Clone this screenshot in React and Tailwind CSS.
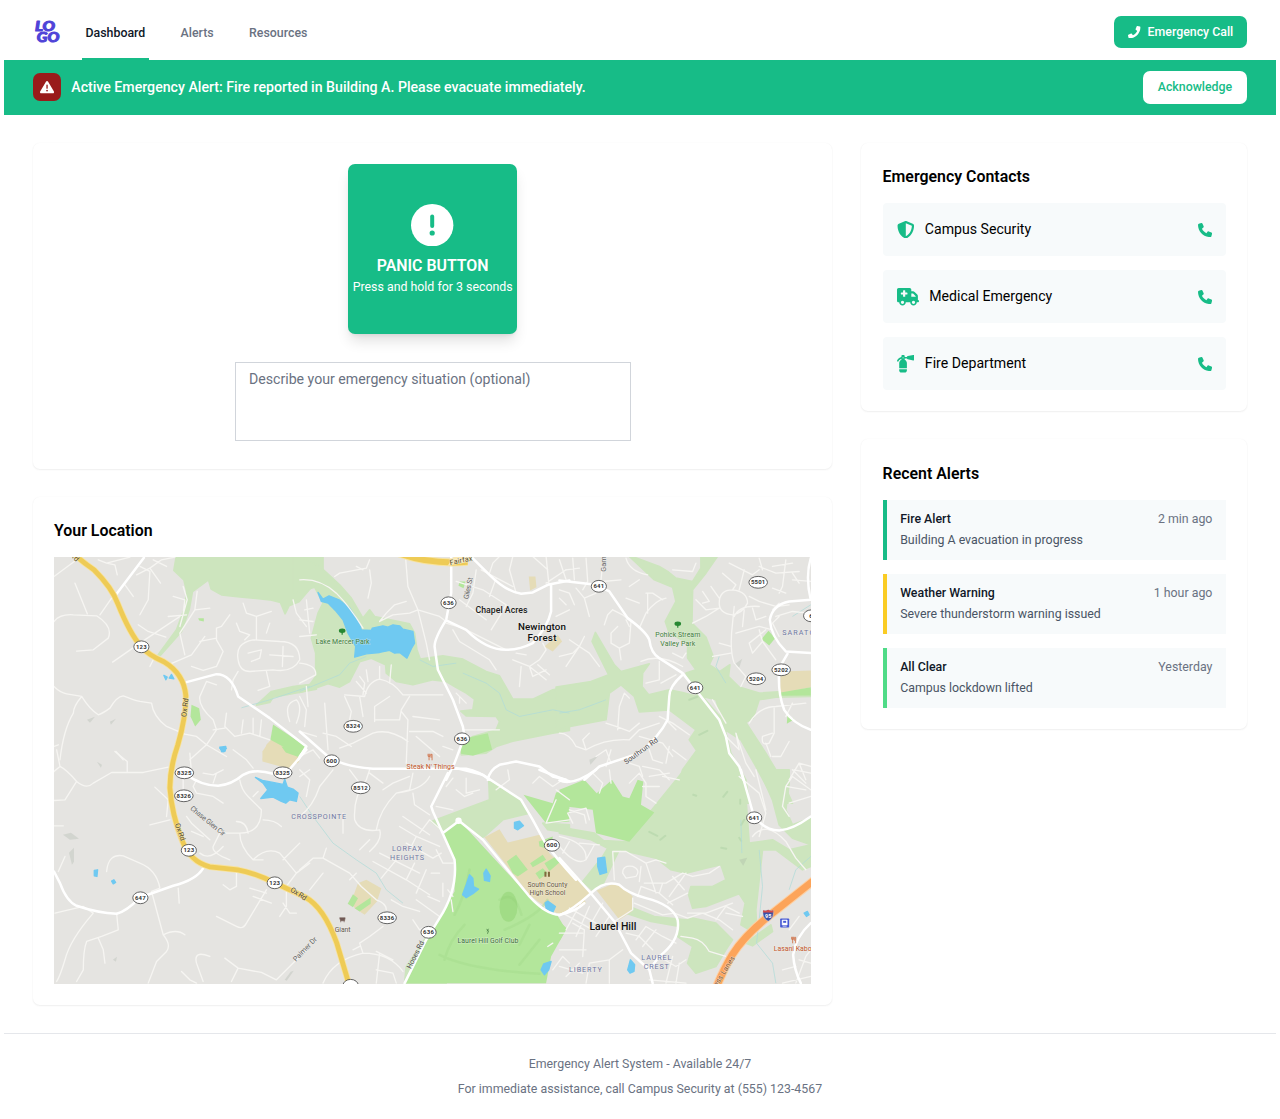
import React from "react";
import { FaPhone as FaHandset } from "react-icons/fa";
import {
  FaPhone,
  FaShieldHalved,
  FaTruckMedical,
  FaFireExtinguisher,
  FaTriangleExclamation,
} from "react-icons/fa6";

/* Each map tile has its own origin; its shapes use a grid of three units per pixel. */
const TILES = {
  nw: { x: 40, y: 500 },
  n: { x: 300, y: 550 },
  ne: { x: 560, y: 550 },
  sw: { x: 40, y: 750 },
  s: { x: 300, y: 770 },
  se: { x: 560, y: 770 },
};

const PARKS = {
  nw: [
    "M410 165L402 212L432 240L440 272L436 320L410 390L355 465L362 466L425 395L448 330L458 275L506 240L514 268L545 285L600 291L690 300L722 308L736 342L748 318L778 306L810 268L850 230L850 165Z",
    "M650 616L695 575L760 560L830 552L830 568L745 584L700 592L690 608Z",
  ],
  n: [
    "M-20 10L60 50L120 105L155 145L190 205L210 180L225 200L330 222L345 250L352 300L362 328L430 318L490 328L560 365L600 378L640 448L700 448L760 420L810 410L810 542L760 550L640 574L590 590L560 610L485 615L488 590L520 560L590 540L600 515L590 500L500 498L484 484L520 480L525 448L500 430L465 410L440 395L400 390L340 405L290 395L260 370L258 345L215 325L180 336L150 395L120 412L85 402L55 412L0 428L-20 425L-20 412L30 405L48 380L48 310L35 265L55 190L70 160L45 112L0 125L-20 130Z",
  ],
  ne: [
    "M205 15L300 50L325 65L350 85L400 95L425 55L425 15L478 15L440 70L400 120L398 220L440 262L462 320L450 345L482 365L512 345L508 380L540 412L600 430L755 420L755 440L650 442L600 450L582 505L560 518L620 610L668 690L700 760L650 760L590 650L545 570L498 540L470 450L430 440L490 510L515 610L560 690L570 760L340 760L370 660L412 602L390 570L410 540L330 480L240 486L225 440L185 405L150 430L140 510L0 536L-10 536L-10 412L0 410L95 395L148 375L98 275L108 248L165 345L185 365L270 342L250 370L248 410L268 435L330 420L370 428L415 440L380 370L410 360L385 325L385 280L330 250L318 215L350 155L340 112L285 90Z",
  ],
  sw: [],
  s: [
    "M395 155L570 90L568 35L625 65L665 90L690 130L610 150L555 200L540 205L480 150L430 185Z",
    "M730 160L810 165L810 190L745 180Z",
    "M320 590L395 480L410 470L350 610L440 640L315 640Z",
  ],
  se: [
    "M375 0L200 216L132 212L105 190L0 172L0 190L95 210L145 235L130 260L70 335L98 360L130 345L165 270L180 240L290 265L335 300L380 310L440 295L485 285L500 330L460 350L395 350L388 375L400 415L440 410L540 372L558 400L545 465L570 480L592 465L590 420L610 240L650 240L730 300L755 290L755 225L690 240L640 210L570 220L560 80L520 0Z",
    "M210 410L285 440L380 450L400 445L470 460L520 510L500 540L470 590L410 610L385 580L400 530L355 500L360 470L275 455L200 430Z",
    "M600 0L690 0L690 40L680 120L700 165L755 145L755 225L700 205L660 165L640 90Z",
    "M635 465L640 485L580 528L560 520Z",
  ],
};

const BRIGHT = {
  nw: [
    "M455 615L478 625L483 660L466 680L452 650Z",
    "M700 674L799 740L785 770L692 720Z",
    "M475 355L492 355L492 365L478 362Z",
  ],
  n: [
    "M484 568L565 550L578 600L520 618L484 612Z",
    "M-5 580L18 595L0 616Z",
    "M480 95L498 95L492 115L477 108Z",
  ],
  ne: ["M607 268L628 243L648 265L630 287Z", "M665 428L755 412L755 437L665 438Z", "M685 495L706 508L683 522Z"],
  sw: ["M725 -10L792 -10L778 22L738 8Z"],
  s: [
    "M477 150L430 190L465 265L465 365L400 475L320 640L740 640L755 560L800 480L770 430L730 420L680 370Z",
    "M672 75L760 100L770 68L810 60L810 155L740 160Z",
    "M622 275L650 255L685 300L655 320L640 310ZM692 280L730 255L740 270L700 292ZM735 280L765 262L780 278L750 304ZM708 310L730 295L745 310L720 328ZM718 215L760 200L755 240L720 230Z",
    "M160 373L175 385L160 412L144 402ZM165 415L213 383L213 402L180 425Z",
  ],
  se: [
    "M0 60L75 30L112 70L158 30L190 80L210 85L235 30L252 35L245 105L285 128L210 216L110 190L100 120L20 110L15 155L0 155Z",
    "M0 455L22 475L0 515Z",
  ],
};

const SAND = {
  nw: ["M680 735L695 718L785 765L775 790L668 780Z"],
  n: ["M688 80L708 80L711 112L692 122ZM735 290L775 255L788 275L760 305Z"],
  ne: ["M665 365L755 362L755 412L662 430Z"],
  sw: ["M668 5L685 -20L770 20L752 58L668 35Z"],
  s: [
    "M555 202L600 178L625 218L720 195L750 250L830 330L860 400L775 432L715 395L690 375Z",
    "M175 340L200 330L245 355L232 395L195 435L165 415L155 395Z",
  ],
  se: ["M0 265L95 370L0 435Z", "M112 362L165 340L200 360L220 380L218 425L180 450Z"],
};

const WATER = {
  nw: ["M372 527L382 532L378 540ZM388 535L395 524L402 537ZM540 742L558 740L556 754L546 756Z"],
  n: [
    "M55 128L70 148L88 138L118 150L150 175L178 218L185 240L215 242L218 235L250 228L265 232L280 225L300 228L310 238L340 245L345 280L336 295L322 325L300 308L285 310L270 302L240 308L200 312L165 322L168 290L145 250L130 210L110 185L85 160L65 155Z",
  ],
  ne: [],
  sw: [
    "M647 83L668 92L700 98L730 104L735 88L743 112L760 118L775 130L770 155L750 150L738 160L725 155L700 142L663 146L684 120L670 100Z",
    "M163 362L173 360L171 380L163 378ZM215 394L222 390L227 398L220 402ZM540 -5L560 -5L552 6Z",
  ],
  s: [
    "M510 315L520 325L522 350L537 358L520 372L500 384L489 375L500 345ZM553 310L560 298L572 318L570 335L555 332ZM645 158L660 154L672 168L655 180L645 175ZM737 400L745 394L768 410L760 428L740 415ZM725 600L733 582L755 575L748 600L735 615Z",
  ],
  se: [
    "M115 265L136 262L142 308L122 314L115 290ZM205 600L213 570L226 585L224 605L212 610ZM735 430L745 425L750 435L742 440Z",
  ],
};

const STREAMS = {
  n: "M0 425L60 400L120 375L150 340L200 320M360 330L400 350L470 340M490 370L560 400L600 430L620 480L660 500L760 480L810 490",
  ne: "M0 490L60 480L140 450M480 320L470 350L500 400M755 165L700 200",
  s: "M0 80L40 140L100 220L170 270L230 310L260 360L310 400",
  se: "M545 150L548 250M600 240L610 350L600 450L592 520L640 580L650 640M755 260L710 300L690 360",
  nw: "M605 624L690 600L810 560",
};

const MINOR = {
  nw: "M42 230L110 180M175 180L200 190L225 195L232 225M200 190L270 172M180 345L215 295M105 250L125 300L142 342M42 365Q60 342 100 345L170 348Q220 380 205 415L160 450L110 454M290 225L330 205L362 250M300 200L330 215L325 300L300 345M330 205L365 180L405 172M255 255L280 290M218 487L300 430L390 370L420 350M295 375L325 395L378 412M330 500L345 470M400 290L435 300L430 340M385 350L440 345M430 260L442 300L420 380M472 275L465 330L420 400L435 465M465 330L510 325M385 495L455 465L495 410M530 385L530 420L550 455L530 500L490 512L455 500M530 415L480 425M530 500L540 480M570 345L545 380L530 385M610 310L620 340L650 350L695 335M650 350L650 418M590 370L600 395L630 405L615 420M690 370L680 400M595 480Q585 430 640 420L720 425Q780 425 780 480Q760 520 700 510L630 515Q600 515 595 480ZM625 460L665 450L660 475L635 485M690 465L760 470M730 440L728 500M680 515L690 560L655 572M595 515L580 540L575 570M760 300L770 340L800 380M800 300L810 400M42 560Q60 578 80 582L125 590Q150 630 175 645Q190 640 210 625Q230 590 250 588Q280 600 300 605L335 610Q340 650 380 680L435 703L470 710L500 735L560 770M125 590Q100 620 100 640Q70 690 60 780M42 740L55 735M500 545L480 590Q475 620 520 660L530 690L500 735L450 780M560 640L555 680L585 710L630 700L690 720M610 660L605 700M640 655L640 700M665 660L660 710M520 690L555 685M750 665Q730 610 770 600Q790 620 770 670M500 545L530 555M228 755L250 780M380 200L340 180M800 560L805 620",
  n: "M105 80L120 70L200 55L210 30M210 60L215 100L205 145M318 25L325 110L355 180L365 220L380 280L390 330M355 180L330 190L280 195L240 215M355 180L420 200L440 215M240 215L260 190L285 165L320 155M190 60L170 50M470 95L550 120L620 165L600 200L575 240M480 150L560 210M500 170L520 130L530 60M545 60L640 110M570 70L580 40L600 20M590 85L570 140M640 20L630 60L650 130M740 20L748 100M745 60L700 20M0 90Q60 85 110 130Q150 170 190 235M15 180L40 175M0 210L40 215M0 260L50 255M0 340Q50 345 48 375L0 400M440 220L490 235L560 270L620 300M460 240L480 275L570 330L590 360M135 435L195 440Q205 395 240 388Q280 395 310 435L430 435M240 350L240 388M200 360L205 395M180 380L195 400L190 435M275 345L270 400M170 395L200 430M225 515L225 470L270 440M225 510L300 510L305 480L330 440M305 485L325 510L320 640M325 575Q270 535 220 550L160 580L120 595M155 590L110 560L70 550M75 460L85 600M0 440L20 480L15 530M135 440L155 485L150 510M180 440L190 500M0 545L50 560M340 500L420 510M330 545L400 545L430 560M350 560L420 620M430 590L460 600M490 540L600 540M470 430L500 460M480 440L480 460M690 350L720 330L740 300L730 280M640 330L690 350L700 380L740 360M690 350L740 390M650 310L680 315M665 350L660 410M715 345L750 375M0 620L40 600L60 625M800 60L740 100M770 200L810 180",
  ne: "M0 30L20 90M40 25L45 90M80 25L85 95L70 120M20 60L60 55M125 90L130 40M0 120L30 130L45 165M0 145L20 165M50 115L75 145L90 200M75 145L110 130M130 95L185 90M160 180L145 195L135 225M160 180L190 195L215 215L210 280L180 295L155 280L155 250L175 230M180 295L185 330M210 230L200 210M240 235L260 190Q290 150 320 145M310 150L280 130L260 130M265 130L265 190M210 110L240 90M200 25Q210 65 265 75M240 160L200 145M340 60L400 65L410 40M60 290L30 270M60 290L20 350M60 290L90 310L120 350M0 320L40 310L60 290L75 260M245 335Q300 310 370 350M340 310L370 325L380 310M300 335L300 390L260 400M305 400L350 375M480 160Q480 120 520 120Q565 125 565 160Q550 190 520 195Q480 190 480 160ZM455 110L480 145M430 125L450 155L430 160M410 150L440 180L480 175M400 220L440 200L480 175M570 140L600 155L650 170L690 165M490 70L530 105L520 120M510 40L550 60L580 75L600 60M600 25L610 60M555 60L540 120M680 30L670 110L660 130M640 115L680 130M600 50L650 70L720 65M640 50L700 40M700 70L720 100M525 170L520 220Q510 300 525 340L560 380L545 410M515 290L480 280M515 310L460 320M525 200Q540 165 600 170M530 250L600 230L640 240M600 240L610 275L580 310M610 275L650 330M580 310L570 280L620 240M660 260L640 220L660 200M760 95L700 90M650 200L700 185L750 190M590 210L620 200M555 180L550 230M580 175L590 210M660 160L640 180M0 550Q30 550 50 590L80 600Q140 565 210 570L240 540M80 600L70 570L90 550M175 540L180 470L195 430L210 445M140 520L170 530L210 545L240 520M240 540L300 520M240 560L310 580L340 620M300 500L340 520L390 555M320 510L350 540M330 590L320 640M340 600L380 630M110 620L140 600L155 640M155 600L140 650M210 640L240 650L250 680M270 600L280 630L310 640M250 650L300 660L330 690M570 520Q600 470 650 470L740 460M645 475L645 550L630 580Q605 590 610 560L640 550M700 460L680 500M690 690L720 640L755 650M720 640L740 690M705 660L755 670M690 575L665 620L640 620M620 580L635 620M500 560L540 600L530 550L560 640L585 680M460 450L500 520",
  sw: "M42 65L60 50Q80 60 110 95Q140 120 160 100L215 68L310 68L385 52M60 50L50 0M110 95L75 150L42 152M225 5L262 35L262 65M345 112L385 150L380 200M330 225L390 210M42 228L70 228M430 70L430 120M455 70L450 10M470 90L460 110L470 130L520 140L550 160M490 70L520 75L550 60M520 100L530 70M580 0L620 30L640 55M600 90Q605 120 625 140L665 180Q665 250 600 250L540 250L520 290Q515 310 570 330M625 250Q620 215 590 215M670 210Q705 210 725 230M440 200L455 220L510 270M600 250Q600 290 640 330Q680 290 720 310L770 370M640 330L670 330M730 330L780 280M770 370L810 340M770 370L740 410L740 470L720 500M730 460L750 490L770 490M200 365Q205 310 250 318L300 340Q350 360 360 415L335 425L370 555Q395 585 380 605L350 635L325 700M370 555Q410 535 435 555M415 415L418 460M590 370L590 410L570 420L550 405M630 415L680 430M640 440L695 460M680 420L620 520Q610 540 590 530L530 500M45 490L130 470L160 490Q90 570 75 630Q60 680 50 695M230 490L235 540L185 560L140 575Q130 600 130 660L110 695M175 565L190 600L195 640M75 320L55 365M510 620Q460 600 470 640L490 695M425 665L450 690L470 700M555 625L595 655L665 668L710 690L810 590M595 655L575 695M480 310Q510 335 550 290M490 260L455 245M640 140L655 125M780 60L810 90L800 140",
  s: "M0 140Q40 110 60 50L100 0M210 0L200 30Q160 80 165 150Q180 190 240 180Q250 210 210 245M390 20Q370 60 290 70Q240 120 230 180M150 0L180 40M340 10L330 60L290 70M340 70L345 105L390 135M210 10L250 40M250 60L280 40L330 20M0 300L40 265L70 265L150 310L185 350L230 390Q260 400 260 420M70 265L80 235M150 330L170 310M180 240L210 210M30 360L70 310M300 170L350 200L420 230M310 140L390 195M360 190L390 150L430 185M320 220L400 265M400 265L425 250M350 200L330 240M410 240L430 280L460 280M220 275L320 330L390 375M240 250L360 310M245 325L290 270M320 330L345 280M380 300L350 370M395 310L420 310M430 340L430 380M385 380L420 395M275 390L310 410L360 425M350 390L420 440M340 450L360 480L380 470M70 640Q100 570 190 550Q270 550 310 605M190 550L180 520L210 500L250 470M230 545L280 570M230 600L280 610L290 640M240 550L230 640M160 540L180 530M0 20L30 0M130 130L130 190M590 60L630 30L625 0M500 25L500 70L540 60M470 60L495 80L520 70M460 25L440 50M410 110L460 120M700 40L720 20L760 50L790 30M770 60L810 90M460 380L445 360M455 390L460 425M740 160L770 90M740 160L810 150M760 520L745 530M760 600L790 560L810 580",
  se: "M0 230Q50 290 80 270Q85 220 0 200M30 215L10 250M80 270L105 225M60 220L120 225M165 330L160 245L200 245L260 280L290 270L320 280M190 310Q190 285 220 290Q245 300 230 320L200 325ZM240 335L245 290M255 340L320 340L370 310L400 320L450 310L480 290M310 340L300 370M330 380L380 310M340 320L375 360M325 400L385 370M260 280L290 370M235 380L245 350L300 370L340 405M220 385L220 420L165 455M225 400L310 435L345 430L385 445L430 430L480 450L520 480M385 430L440 430L520 400M470 450L500 410L540 430M500 430L550 440M365 500L400 505Q430 510 450 545L500 560M10 430L100 480M30 415L110 460M20 480L70 390M50 500L90 410M70 560L75 480L40 460M0 490L70 490M0 540L80 540M90 470L130 400M110 500L150 440M230 510L260 470L310 500L350 520M200 490L240 500L280 540M250 530L290 480M300 560L350 590L380 570M340 560L320 640M150 570L90 580L80 640M150 570L150 640M0 590L70 610M190 540L150 570M20 620L60 580M270 630L380 640M360 580L350 640M100 10L130 40L120 70M150 0L155 40M210 40L240 10L260 40L260 80L290 100M250 50L300 50M310 20L360 30M270 20L330 10M540 20L600 70L620 130L600 200M590 0L620 120M580 200Q620 150 680 215L710 265L740 300M755 60L700 20L680 50L670 110L690 140M680 50L740 60M700 0L740 40M690 100L755 80M710 640L740 560L755 540M720 570L755 580M670 600L710 590M670 640L755 620M30 120L75 135L80 160M40 160L25 130L80 115L90 150M690 480L720 440",
};

const MAJOR = {
  nw: "M228 285L312 174M440 547L530 523Q575 523 595 590L690 655L800 740L775 780",
  n: "M455 20L455 130L440 210Q405 265 405 290L415 360L460 450L490 530L495 560L465 640L440 690M512 18L570 75Q620 125 665 132L700 128L745 105L810 92M755 105L755 185Q745 230 700 280Q660 300 620 300Q560 300 500 240L440 212M0 545L85 620Q130 650 220 657L500 657Q540 665 570 690M565 690Q570 660 600 645L650 635L720 650L760 680L800 690M18 595L0 620",
  ne: "M0 92L110 105L150 125L205 205Q260 245 270 270Q275 310 300 325L370 370L480 510L500 560L510 610L540 650L553 690M370 375Q330 410 330 440L325 510Q300 560 240 610L120 650L75 690M755 150L690 155Q640 165 632 210Q635 260 680 305L760 310M755 25Q738 80 755 150M685 312L660 355Q655 430 675 480Q700 520 755 540",
  sw: "M440 75Q485 108 535 108Q575 105 610 75Q645 55 700 72L750 58L800 0M42 365L60 400Q80 455 110 468Q175 490 230 492Q260 485 300 443L400 408Q470 390 490 355",
  s: "M445 10L395 110L400 125L465 270Q475 360 420 445L380 510L315 640M470 -5L550 15L665 90L700 150L735 215Q770 265 830 330M810 35L720 0M480 152L432 188M477 152L550 210L690 380Q740 435 780 435Q830 425 855 400",
  se: "M0 265L90 365L165 455L215 550L270 600L280 640M0 437Q40 420 95 370Q135 330 180 345Q205 370 260 385Q340 405 355 450Q365 510 300 560L270 600M545 0L580 125Q605 180 660 182Q700 180 755 140M755 460Q710 500 702 555Q705 600 725 640M0 32Q40 50 110 0",
};

const SHIELDS = [
  ["123", 141.5, 647], ["636", 449, 603], ["641", 599.5, 586.5], ["5501", 759, 582.5], ["5202", 782, 670],
  ["5204", 757, 679], ["641", 696, 688], ["636", 462.5, 739], ["8324", 353.5, 726.5], ["600", 332, 761],
  ["8325", 184.5, 773], ["8325", 283, 773], ["8326", 184, 796], ["8512", 361, 788], ["123", 189, 850.5],
  ["123", 275, 883], ["647", 140.5, 898], ["8336", 387.5, 918], ["636", 429, 932.5], ["600", 552.5, 845.5],
  ["641", 755, 818], ["6", 812, 616], ["", 351, 985.5],
];

/* text, centre x, baseline y, width, size, colour, weight, rotation */
const LABELS = [
  ["Chapel Acres", 502, 613, 52, 8.8, "#222", 500, 0],
  ["Newington", 542.5, 630, 48, 9.8, "#111", 500, 0],
  ["Forest", 542.5, 641.5, 29, 9.8, "#111", 500, 0],
  ["Laurel Hill", 613.5, 930.5, 47, 10.5, "#111", 500, 0],
  ["Lake Mercer Park", 343, 644.5, 54, 7, "#3f7f3c", 400, 0],
  ["Pohick Stream", 678.5, 637, 45, 7, "#3f7f3c", 400, 0],
  ["Valley Park", 678.5, 646, 35, 7, "#3f7f3c", 400, 0],
  ["Steak N' Things", 431, 769.5, 48, 7, "#c4572b", 400, 0],
  ["CROSSPOINTE", 319, 819.5, 55, 7.2, "#7078a4", 400, 0],
  ["LORFAX", 407.5, 851, 30, 7.2, "#7078a4", 400, 0],
  ["HEIGHTS", 407.5, 859.8, 34, 7.2, "#7078a4", 400, 0],
  ["SARATOGA", 805, 635.5, 44, 7.2, "#7078a4", 400, 0],
  ["LIBERTY", 586, 972.5, 33, 7.2, "#7078a4", 400, 0],
  ["LAUREL", 657, 960.5, 30, 7.2, "#7078a4", 400, 0],
  ["CREST", 657, 969.5, 25, 7.2, "#7078a4", 400, 0],
  ["South County", 548, 887, 40, 6.8, "#6b5a41", 400, 0],
  ["High School", 548, 895.5, 36, 6.8, "#6b5a41", 400, 0],
  ["Laurel Hill Golf Club", 488.5, 943.3, 61, 7, "#3d7040", 400, 0],
  ["Giant", 343, 932, 16, 7, "#65594f", 400, 0],
  ["Lasani Kabob", 795.5, 951.7, 42, 7, "#c4572b", 400, 0],
  ["Ox Rd", 187.5, 708, 19, 7.4, "#554a28", 400, -83],
  ["Ox Rd", 178, 833, 18, 7.4, "#554a28", 400, 70],
  ["Ox Rd", 297.5, 896, 18, 7.4, "#554a28", 400, 33],
  ["Rd", 73, 559, 9, 7.4, "#554a28", 400, 45],
  ["Fairfax", 462, 563, 23, 7.2, "#554a28", 400, -12],
  ["Giles St", 471, 589, 22, 7.2, "#636363", 400, -78],
  ["Gambrill", 606.5, 558, 28, 7.2, "#636363", 400, -90],
  ["Southrun Rd", 643, 753, 40, 7.2, "#4d4d4d", 400, -36],
  ["Chase Glen Cir", 206.5, 823, 43, 7.2, "#636363", 400, 39],
  ["Palmer Dr", 307, 951, 31, 7.2, "#636363", 400, -46],
  ["Hooes Rd", 418, 956, 30, 7.2, "#4d4d4d", 400, -63],
  ["Express Lanes", 723, 979, 49, 7.2, "#7b5639", 400, -58],
];

function Layer({ data, ...props }) {
  return (
    <g {...props}>
      {Object.entries(data).map(([key, shapes]) => (
        <g key={key} transform={`translate(${TILES[key].x} ${TILES[key].y}) scale(.33333)`}>
          {[].concat(shapes).map((d, i) => (
            <path key={i} d={d} />
          ))}
        </g>
      ))}
    </g>
  );
}

function Tree({ x, y }) {
  return (
    <g fill="#278732">
      <ellipse cx={x} cy={y - 1} rx="3.300" ry="2.200" />
      <path d={`M${x - 0.6} ${y}h1.2v3h-1.2z`} />
    </g>
  );
}

function LocationMap() {
  const yellow =
    "M68 549Q82 562 94 570Q112 588 118 604Q130 634 141.500 647Q148 655 164 662Q184 674 186 696Q186 718 178 745Q170 768 170 788Q172 815 182 840Q190 862 210 867L238 870Q255 873 275 883L305 897Q324 907 337 943L351 990";
  const yellow2 = "M398 553Q430 565 468 562";
  const orange = "M818 878L770 916Q745 936 733 955Q724 970 716 990";
  return (
    <svg
      viewBox="54 557.200 758 426.500"
      preserveAspectRatio="none"
      className="block h-[426.5px] w-full overflow-hidden"
      fontFamily="Roboto, sans-serif"
      aria-label="Map"
    >
      <rect x="50" y="550" width="770" height="440" fill="#e5e4e1" />
      <Layer data={PARKS} fill="#cde5be" stroke="#cde5be" strokeWidth="5" strokeLinejoin="round" />
      <Layer data={SAND} fill="#e5dcb7" />
      <Layer data={BRIGHT} fill="#b3e69b" />
      <g fill="none" stroke="#a3d989" strokeWidth="2.500" opacity=".4" strokeLinecap="round">
        <path d="M470 870Q466 895 455 915M500 900Q515 890 522 915M505 930Q540 915 548 900M440 955Q470 970 540 974M530 925L520 945M465 925Q450 940 445 960M540 940L520 965" />
      </g>
      <g fill="none" stroke="#b2d3a8" strokeWidth="2" opacity=".6" strokeLinecap="round">
        <path d="M661 840l5-4M650 832l8 4M694 795l3 1M741 800v4M740 838l2 3M722 848l5 1M690 700l8-3M700 735l8-4M728 792l-4 5M745 820l-3 5" />
      </g>
      <g fill="#9ca79b" opacity=".25">
        <ellipse cx="509" cy="907" rx="9" ry="15" fill="#6fc04a" />
        <path d="M63 835l8-2 8 6-9 1zM69 853l5-5v14l-2 3zM87 720l8-3-5 6zM110 722l6-3-5 6zM97 762l5 3-1 3zM590 760l9-4-8 9zM735 665l8-6-3 9zM285 980l6-8 3-1-7 10zM113 960l4-3-1 5zM740 860l8-2-4 8z" />
      </g>
      <Layer data={WATER} fill="#6fc9f1" stroke="#6fc9f1" strokeWidth="4" strokeLinejoin="round" />
      <Layer data={STREAMS} fill="none" stroke="#b0dbd8" strokeWidth="2.200" strokeLinejoin="round" />
      <Layer data={MINOR} fill="none" stroke="#f6f5f2" strokeWidth="4" strokeLinecap="round" strokeLinejoin="round" />
      <Layer data={MAJOR} fill="none" stroke="#fff" strokeWidth="7.500" strokeLinecap="round" strokeLinejoin="round" />
      <circle cx="459" cy="821" r="3.200" fill="#fff" />
      <g fill="none" strokeLinejoin="round">
        <path d={yellow} stroke="#f7e3a0" strokeWidth="6.400" />
        <path d={yellow} stroke="#eecb56" strokeWidth="4.800" />
        <path d={yellow2} stroke="#f7e3a0" strokeWidth="8" />
        <path d={yellow2} stroke="#eecb56" strokeWidth="6" />
        <path d={orange} stroke="#fcd0a4" strokeWidth="9" />
        <path d={orange} stroke="#fca45a" strokeWidth="7" />
      </g>
      <path d="M448 566L456 555L475 554L470 562Z" fill="#f8e7b2" />
      {LABELS.map(([text, x, y, width, size, color, weight, angle], i) => (
        <text
          key={i}
          x={x}
          y={y}
          textAnchor="middle"
          textLength={width}
          fontSize={size}
          fontWeight={weight}
          fill={color}
          stroke="#f2f1ee"
          strokeOpacity=".45"
          strokeWidth="1.200"
          paintOrder="stroke"
          transform={`rotate(${angle} ${x} ${y})`}
        >
          {text}
        </text>
      ))}
      {SHIELDS.map(([text, x, y], i) => (
        <g key={i}>
          <ellipse cx={x} cy={y} rx={text.length > 3 ? 9.3 : 7.6} ry="5.900" fill="#fff" stroke="#555" strokeWidth=".9" />
          <text x={x} y={y + 2.1} textAnchor="middle" fontSize="6" fontWeight="700" letterSpacing=".2" fill="#333">
            {text}
          </text>
        </g>
      ))}
      <Tree x={342.5} y={632} />
      <Tree x={678.5} y={625} />
      <g fill="none" stroke="#ce6a3d" strokeWidth=".8">
        <path d="M429.500 754v6.500M428.500 754v2.500h2v-2.500M432.500 760.500v-6h-1v3.500" />
        <path d="M793.500 937v6.500M792.500 937v2.500h2v-2.500M796.500 943.500v-6h-1v3.500" />
      </g>
      <path d="M340 918h5.500l-.6 3h-4zM341 921v1.500M344.500 921v1.500" fill="#705954" stroke="#705954" strokeWidth=".6" />
      <path d="M545 872h2v5h-2zM548.500 872h2v5h-2z" fill="#816a3d" />
      <path d="M487 929.500l2 1.500-1 3M489 929l-1.500 2.500" fill="none" stroke="#477e45" strokeWidth=".8" />
      <path d="M764 910.500q2.500 1 5-.5q2.500 1.500 5 .5q1.500 7.500-5 11q-6.500-3.500-5-11z" fill="#3d51a5" stroke="#ddd" strokeWidth=".5" />
      <path d="M764 910.500q2.500 1 5-.5q2.500 1.500 5 .5l.2 2.200h-10.400z" fill="#d34b4b" />
      <text x="769" y="918.500" textAnchor="middle" fontSize="5.500" fontWeight="700" fill="#fff">95</text>
      <rect x="781" y="918.700" width="9" height="9" rx=".8" fill="#4659d4" />
      <path d="M783 920.200h5v5h-5zM783.500 926.500h4" fill="#fff" stroke="#fff" strokeWidth=".6" />
      <path d="M784 921h3v2h-3z" fill="#4659d4" />
    </svg>
  );
}

const contacts = [
  { name: "Campus Security", icon: <FaShieldHalved className="size-[17.6px]" /> },
  { name: "Medical Emergency", icon: <FaTruckMedical className="h-[17.6px] w-[22px]" /> },
  { name: "Fire Department", icon: <FaFireExtinguisher className="size-[17.6px]" /> },
];

const alerts = [
  { title: "Fire Alert", time: "2 min ago", text: "Building A evacuation in progress", border: "border-[#17bc87]" },
  { title: "Weather Warning", time: "1 hour ago", text: "Severe thunderstorm warning issued", border: "border-[#facc24]" },
  { title: "All Clear", time: "Yesterday", text: "Campus lockdown lifted", border: "border-[#4fdb87]" },
];

function Card({ className = "", children }) {
  return (
    <section
      className={`rounded-[7px] bg-white p-[21.2px] shadow-[0_0_2px_rgba(0,0,0,0.04),0_1px_2px_rgba(0,0,0,0.06)] ${className}`}
    >
      {children}
    </section>
  );
}

function CardTitle({ children }) {
  return (
    <h2 className="mb-[14.1px] h-[24.7px] pt-px text-[15.9px] leading-[24.7px] font-semibold text-black">{children}</h2>
  );
}

function Logo() {
  return (
    <svg
      viewBox="0 0 26 24"
      className="h-6 w-[26px] overflow-visible"
      fill="#4f43d8"
      stroke="#4f43d8"
      strokeWidth="1"
      strokeLinejoin="round"
      fontFamily="Lato, sans-serif"
      fontWeight="900"
      fontStyle="italic"
    >
      <text x=".9" y="10.800" fontSize="13.500" textLength="20" lengthAdjust="spacingAndGlyphs">LO</text>
      <text x="2.800" y="22.400" fontSize="13.500" textLength="22.500" lengthAdjust="spacingAndGlyphs">GO</text>
    </svg>
  );
}

export default function App() {
  return (
    <div className="h-[1119px] overflow-hidden bg-white px-1 font-[Roboto,sans-serif] text-[14.12px] text-black">
      <header className="flex h-[60px] items-center justify-between pr-[28.8px] pl-[28.5px]">
        <div className="flex h-full items-center">
          <div className="mt-1 ml-[1.5px] flex h-full items-center">
            <Logo />
          </div>
          <nav className="ml-[22px] flex h-full gap-[28.3px] text-[12.36px] font-medium text-gray-500">
            <a className="flex items-center border-b-[2px] border-[#17bc87] px-[3.5px] pt-[9px] text-gray-900">Dashboard</a>
            <a className="flex items-center px-[3.5px] pt-[7px]">Alerts</a>
            <a className="flex items-center px-[3.5px] pt-[7px]">Resources</a>
          </nav>
        </div>
        <button className="mt-[3px] flex h-8 w-[133px] items-center justify-center gap-[7px] rounded-[7px] bg-[#17bc87] text-[12.36px] font-medium text-white">
          <FaHandset className="mt-px size-[12.4px]" />
          <span className="pt-[1.5px]">Emergency Call</span>
        </button>
      </header>

      <div className="flex h-[54.5px] items-center justify-between bg-[#17bc87] pr-[28.8px] pl-[28.5px] text-white">
        <div className="flex items-center gap-[10.6px]">
          <span className="flex size-[28.2px] items-center justify-center rounded-[7px] bg-[#991b1b]">
            <FaTriangleExclamation className="size-[14.1px]" />
          </span>
          <p className="text-[14.15px] font-medium">
            Active Emergency Alert: Fire reported in Building A. Please evacuate immediately.
          </p>
        </div>
        <button className="h-[33.5px] w-[104.5px] rounded-[7px] bg-white pt-px text-[12.36px] font-medium text-[#17bc87]">
          Acknowledge
        </button>
      </div>

      <main className="grid grid-cols-[799.5px_385.8px] gap-[29px] pt-[28.4px] pl-[28.9px]">
        <div>
          <Card className="mb-[28.2px] flex h-[326px] flex-col items-center">
            <button className="flex size-[169.5px] shrink-0 flex-col items-center rounded-[7px] bg-[#17bc87] pt-[40px] text-white shadow-[0_9px_14px_-2px_rgba(0,0,0,0.12),0_3px_5px_-3px_rgba(0,0,0,0.12)]">
              <svg viewBox="0 0 42.400 41.500" className="h-[41.5px] w-[42.4px]">
                <circle cx="21.200" cy="21.200" r="21.200" fill="#fff" />
                <path d="M21.200 12.500v9.500" stroke="#17bc87" strokeWidth="4" strokeLinecap="round" />
                <circle cx="21.200" cy="29" r="2.600" fill="#17bc87" />
              </svg>
              <span className="mt-[8px] text-[15.9px] leading-[24.7px] font-semibold">PANIC BUTTON</span>
              <span className="mt-[0.8px] text-[12.36px] leading-[17.7px] whitespace-nowrap">Press and hold for 3 seconds</span>
            </button>
            <textarea
              className="mt-[28.2px] h-[79px] w-[396px] shrink-0 resize-none border border-[#d1d5db] px-[13.3px] py-[6px] text-[14.15px] leading-[21.2px] placeholder:text-gray-500"
              placeholder="Describe your emergency situation (optional)"
            />
          </Card>
          <Card>
            <CardTitle>Your Location</CardTitle>
            <LocationMap />
          </Card>
        </div>

        <aside>
          <Card className="mb-[28.2px]">
            <CardTitle>Emergency Contacts</CardTitle>
            <div className="flex flex-col gap-[14.1px]">
              {contacts.map((c) => (
                <div key={c.name} className="flex h-[53px] items-center justify-between rounded-[4px] bg-[#f7fafb] px-[14.1px]">
                  <div className="flex items-center gap-[10.6px]">
                    <span className="pt-[0.5px] text-[#17bc87]">{c.icon}</span>
                    <span>{c.name}</span>
                  </div>
                  <FaPhone className="mt-px size-[14.1px] text-[#17bc87]" />
                </div>
              ))}
            </div>
          </Card>
          <Card className="h-[289.5px]">
            <CardTitle>
              <span className="relative top-[0.6px]">Recent Alerts</span>
            </CardTitle>
            <div className="mt-[14.6px] flex flex-col gap-[14.1px]">
              {alerts.map((a) => (
                <div
                  key={a.title}
                  className={`h-[60px] border-l-[4px] bg-[#f7fafb] px-[13.6px] pt-[11.2px] text-[12.36px] leading-[17.66px] ${a.border}`}
                >
                  <div className="flex justify-between">
                    <h3 className="font-medium text-gray-900">{a.title}</h3>
                    <span className="text-gray-500">{a.time}</span>
                  </div>
                  <p className="mt-[3.5px] text-gray-600">{a.text}</p>
                </div>
              ))}
            </div>
          </Card>
        </aside>
      </main>

      <footer className="mt-[28px] border-t border-gray-200 pt-[22.3px] text-center text-[12.36px] leading-[17.7px] text-gray-500">
        <p>Emergency Alert System - Available 24/7</p>
        <p className="mt-[7px]">For immediate assistance, call Campus Security at (555) 123-4567</p>
      </footer>
    </div>
  );
}
